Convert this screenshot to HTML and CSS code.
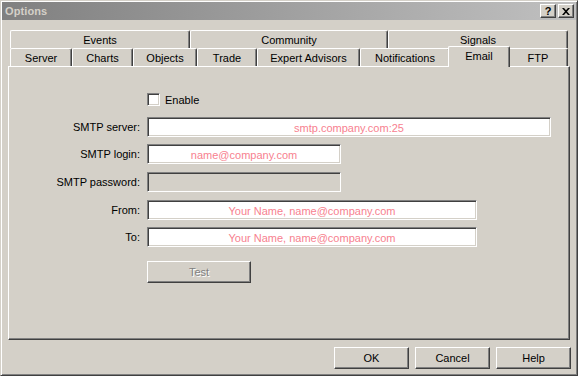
FILE: index.html
```html
<!DOCTYPE html>
<html>
<head>
<meta charset="utf-8">
<link rel="stylesheet" href="styles.css">
</head>
<body>
<div class="window">
  <div class="titlebar">
    <span class="title">Options</span>
    <div class="tb-btns">
      <div class="tb-btn help">?</div>
      <div class="tb-btn close">
        <svg width="8" height="7" viewBox="0 0 8 7"><path d="M0 0h2l2 2.2L6 0h2L5 3.5 8 7H6L4 4.8 2 7H0l3-3.5z" fill="#000"/></svg>
      </div>
    </div>
  </div>
  <div class="content">
    <div class="tabs">
      <div class="tab-row back">
        <div class="tab w-events">Events</div>
        <div class="tab w-community">Community</div>
        <div class="tab w-signals">Signals</div>
      </div>
      <div class="tab-row front">
        <div class="tab w-server">Server</div>
        <div class="tab w-charts">Charts</div>
        <div class="tab w-objects">Objects</div>
        <div class="tab w-trade">Trade</div>
        <div class="tab w-expert">Expert Advisors</div>
        <div class="tab w-notif">Notifications</div>
        <div class="tab w-email selected">Email</div>
        <div class="tab w-ftp">FTP</div>
      </div>
    </div>
    <div class="panel">
      <div class="row row-enable">
        <span class="label"></span>
        <span class="checkbox"></span>
        <span class="check-text">Enable</span>
      </div>
      <div class="row row-first">
        <span class="label">SMTP server:</span>
        <div class="input w-long">smtp.company.com:25</div>
      </div>
      <div class="row row-tight">
        <span class="label">SMTP login:</span>
        <div class="input w-short">name@company.com</div>
      </div>
      <div class="row">
        <span class="label">SMTP password:</span>
        <div class="input w-short disabled"></div>
      </div>
      <div class="row">
        <span class="label">From:</span>
        <div class="input w-mid">Your Name, name@company.com</div>
      </div>
      <div class="row row-tight">
        <span class="label">To:</span>
        <div class="input w-mid">Your Name, name@company.com</div>
      </div>
      <div class="row row-test">
        <span class="label"></span>
        <div class="btn btn-test">Test</div>
      </div>
    </div>
    <div class="actions">
      <div class="btn">OK</div>
      <div class="btn">Cancel</div>
      <div class="btn">Help</div>
    </div>
  </div>
</div>
</body>
</html>
```
FILE: styles.css
```css
* { box-sizing: border-box; }
html, body {
  margin: 0;
  padding: 0;
  background: #d4d0c8;
}
body {
  font-family: "Liberation Sans", Arial, sans-serif;
  font-size: 11px;
  color: #000;
}
.window {
  width: 578px;
  height: 376px;
  overflow: hidden;
  background: #d4d0c8;
  border: 1px solid;
  border-color: #d4d0c8 #404040 #404040 #d4d0c8;
  box-shadow: inset 1px 1px #fff, inset -1px -1px #808080;
  padding: 1px;
}
.titlebar {
  height: 18px;
  display: flex;
  align-items: center;
  justify-content: space-between;
  padding: 0 2px 0 3px;
  background: linear-gradient(to right, #808080, #c0c0c0);
}
.title {
  font-weight: bold;
  color: #d4d0c8;
  font-size: 11px;
  letter-spacing: 0.1px;
}
.tb-btns {
  display: flex;
  gap: 2px;
}
.tb-btn {
  width: 16px;
  height: 14px;
  background: #d4d0c8;
  border: 1px solid;
  border-color: #fff #404040 #404040 #fff;
  box-shadow: inset -1px -1px #808080;
  display: flex;
  align-items: center;
  justify-content: center;
  font-weight: bold;
  font-size: 11px;
  line-height: 1;
}
.content {
  padding: 10px 5px 0 6px;
}
.tabs {
  padding-left: 2px;
}
.tab-row {
  display: flex;
  height: 18px;
}
.tab {
  height: 18px;
  background: #d4d0c8;
  border-top: 1px solid #fff;
  border-left: 1px solid #fff;
  border-right: 1px solid #404040;
  box-shadow: inset -1px 0 #808080;
  border-top-left-radius: 2px;
  border-top-right-radius: 2px;
  display: flex;
  align-items: center;
  justify-content: center;
  padding-top: 1px;
  white-space: nowrap;
}
.tab.selected {
  position: relative;
  z-index: 1;
  margin: -2px -2px -1px;
  height: 21px;
  align-items: flex-start;
  padding-top: 3px;
}
.w-events { width: 180px; }
.w-community { width: 198px; }
.w-signals { width: 180px; }
.w-server { width: 62px; }
.w-charts { width: 61px; }
.w-objects { width: 64px; }
.w-trade { width: 60px; }
.w-expert { width: 103px; }
.w-notif { width: 90px; }
.w-email { width: 62px; }
.w-ftp { width: 60px; }
.panel {
  width: 562px;
  height: 274px;
  border: 1px solid;
  border-color: #fff #404040 #404040 #fff;
  box-shadow: inset -1px -1px #808080;
  padding-top: 26px;
}
.row {
  display: flex;
  align-items: center;
  height: 20px;
  margin-top: 8px;
}
.row-enable {
  height: 13px;
  margin-top: 0;
}
.row-first { margin-top: 11px; }
.row-tight { margin-top: 7px; }
.row-test {
  height: 22px;
  margin-top: 14px;
}
.label {
  width: 131px;
  margin-right: 7px;
  text-align: right;
  white-space: nowrap;
}
.checkbox {
  width: 13px;
  height: 13px;
  background: #fff;
  border: 1px solid;
  border-color: #808080 #fff #fff #808080;
  box-shadow: inset 1px 1px #404040, inset -1px -1px #d4d0c8;
}
.check-text {
  margin-left: 5px;
}
.input {
  height: 20px;
  background: #fff;
  border: 1px solid;
  border-color: #808080 #fff #fff #808080;
  box-shadow: inset 1px 1px #404040, inset -1px -1px #d4d0c8;
  color: #f7818f;
  display: flex;
  align-items: center;
  justify-content: center;
  padding-top: 1px;
  white-space: nowrap;
}
.input.disabled { background: #d4d0c8; }
.w-long { width: 404px; }
.w-short { width: 194px; }
.w-mid { width: 330px; }
.btn {
  width: 75px;
  height: 22px;
  background: #d4d0c8;
  border: 1px solid;
  border-color: #fff #404040 #404040 #fff;
  box-shadow: inset -1px -1px #808080;
  display: flex;
  align-items: center;
  justify-content: center;
}
.btn-test {
  width: 104px;
  color: #808080;
  text-shadow: 1px 1px #fff;
}
.actions {
  display: flex;
  justify-content: flex-end;
  gap: 6px;
  margin-top: 7px;
}
```
